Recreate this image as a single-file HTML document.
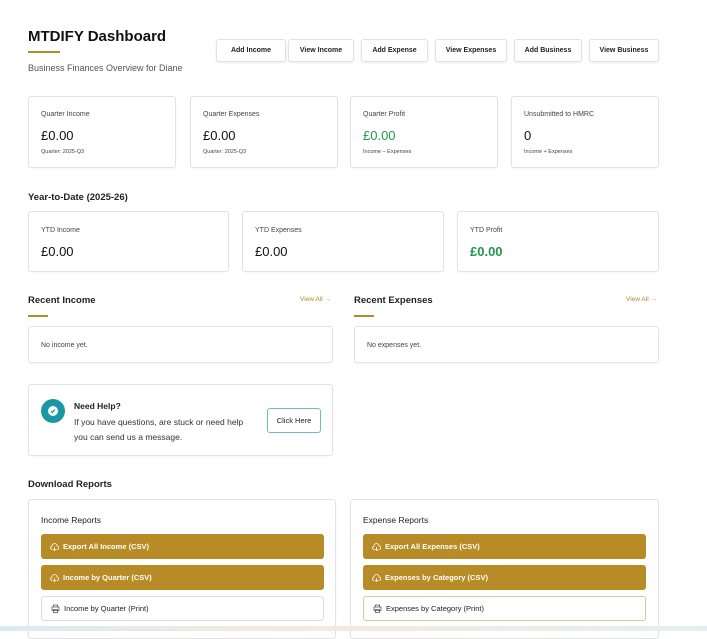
<!DOCTYPE html>
<html><head><style>
*{margin:0;padding:0;box-sizing:border-box}
body{width:707px;height:631px;overflow:hidden;background:#fff;font-family:"Liberation Sans",sans-serif;color:#222;position:relative}
.a{position:absolute}
.card{position:absolute;border:1px solid #e3e3e3;border-radius:3px;background:#fff;box-shadow:0 1px 2px rgba(0,0,0,.04)}
.btn{position:absolute;top:39px;height:23px;border:1px solid #e2e2e2;border-radius:3px;font-size:7px;font-weight:bold;display:flex;align-items:center;justify-content:center;box-shadow:0 1px 2px rgba(0,0,0,.08);color:#222}
.lbl{position:absolute;font-size:7px;color:#444}
.val{position:absolute;font-size:13px;color:#111}
.sub{position:absolute;font-size:5.5px;color:#444}
.g{color:#1e9a4a}
.h{position:absolute;font-size:9.5px;font-weight:bold;color:#222}
.ul{position:absolute;height:2px;background:#b8892a}
.va{position:absolute;font-size:6.5px;color:#b8892a}
.gb{position:absolute;height:25px;background:#b78b25;border-radius:3px;color:#fff;font-size:7.5px;font-weight:bold;display:flex;align-items:center;padding-left:9px}
.wb{position:absolute;height:25px;background:#fff;border:1px solid #ddd;border-radius:3px;color:#222;font-size:7.5px;display:flex;align-items:center;padding-left:9px}
svg{margin-right:4px}
</style></head><body>
<div class="a" style="left:28px;top:28px;font-size:15px;font-weight:bold;color:#111">MTDIFY Dashboard</div>
<div class="ul" style="left:28px;top:51px;width:32px"></div>
<div class="a" style="left:28px;top:63px;font-size:9px;color:#555">Business Finances Overview for Diane</div>
<div class="btn" style="left:216px;width:70px">Add Income</div>
<div class="btn" style="left:288px;width:66px">View Income</div>
<div class="btn" style="left:361px;width:67px">Add Expense</div>
<div class="btn" style="left:435px;width:72px">View Expenses</div>
<div class="btn" style="left:514px;width:68px">Add Business</div>
<div class="btn" style="left:589px;width:70px">View Business</div>

<div class="card" style="left:28px;top:96px;width:148px;height:72px"><div class="lbl" style="left:12px;top:14px">Quarter Income</div><div class="val" style="left:12px;top:31px">£0.00</div><div class="sub" style="left:12px;top:52px">Quarter: 2025-Q3</div></div>
<div class="card" style="left:190px;top:96px;width:148px;height:72px"><div class="lbl" style="left:12px;top:14px">Quarter Expenses</div><div class="val" style="left:12px;top:31px">£0.00</div><div class="sub" style="left:12px;top:52px">Quarter: 2025-Q3</div></div>
<div class="card" style="left:350px;top:96px;width:148px;height:72px"><div class="lbl" style="left:12px;top:14px">Quarter Profit</div><div class="val g" style="left:12px;top:31px">£0.00</div><div class="sub" style="left:12px;top:52px">Income – Expenses</div></div>
<div class="card" style="left:511px;top:96px;width:148px;height:72px"><div class="lbl" style="left:12px;top:14px">Unsubmitted to HMRC</div><div class="val" style="left:12px;top:31px">0</div><div class="sub" style="left:12px;top:52px">Income + Expenses</div></div>

<div class="h" style="left:28px;top:192px">Year-to-Date (2025-26)</div>
<div class="card" style="left:28px;top:211px;width:201px;height:61px"><div class="lbl" style="left:12px;top:15px">YTD Income</div><div class="val" style="left:12px;top:32px">£0.00</div></div>
<div class="card" style="left:242px;top:211px;width:202px;height:61px"><div class="lbl" style="left:12px;top:15px">YTD Expenses</div><div class="val" style="left:12px;top:32px">£0.00</div></div>
<div class="card" style="left:457px;top:211px;width:202px;height:61px"><div class="lbl" style="left:12px;top:15px">YTD Profit</div><div class="val g" style="left:12px;top:32px;font-weight:bold">£0.00</div></div>

<div class="h" style="left:28px;top:295px">Recent Income</div>
<div class="ul" style="left:28px;top:315px;width:20px"></div>
<div class="va" style="left:300px;top:296px">View All →</div>
<div class="h" style="left:354px;top:295px">Recent Expenses</div>
<div class="ul" style="left:354px;top:315px;width:20px"></div>
<div class="va" style="left:626px;top:296px">View All →</div>
<div class="card" style="left:28px;top:326px;width:305px;height:37px"><div class="lbl" style="left:12px;top:15px">No income yet.</div></div>
<div class="card" style="left:354px;top:326px;width:305px;height:37px"><div class="lbl" style="left:12px;top:15px">No expenses yet.</div></div>

<div class="card" style="left:28px;top:384px;width:305px;height:72px">
<div class="a" style="left:12px;top:14px;width:24px;height:24px;border-radius:50%;background:#1a97a5"><div class="a" style="left:7px;top:7px;width:10px;height:10px;border-radius:50%;background:#fff"></div><svg class="a" style="left:8px;top:8px" width="8" height="8" viewBox="0 0 8 8"><path d="M2 4.2L3.4 5.5 6 2.6" stroke="#1a97a5" stroke-width="1.3" fill="none"/></svg></div>
<div class="a" style="left:45px;top:16px;font-size:8.5px;font-weight:bold">Need Help?</div>
<div class="a" style="left:45px;top:30px;font-size:8.5px;line-height:15px;color:#333">If you have questions, are stuck or need help<br>you can send us a message.</div>
<div class="a" style="left:238px;top:23px;width:54px;height:25px;border:1px solid #6bbdc6;border-radius:3px;font-size:7.5px;display:flex;align-items:center;justify-content:center">Click Here</div>
</div>

<div class="h" style="left:28px;top:479px">Download Reports</div>
<div class="card" style="left:28px;top:499px;width:308px;height:140px">
<div class="a" style="left:12px;top:15px;font-size:8.5px">Income Reports</div></div>
<div class="card" style="left:350px;top:499px;width:309px;height:140px">
<div class="a" style="left:12px;top:15px;font-size:8.5px">Expense Reports</div></div>
<div class="gb" style="left:41px;top:534px;width:283px"><svg width="9" height="8" viewBox="0 0 9 8"><path d="M2.5 6.5H2A1.8 1.8 0 0 1 2 3 2.5 2.5 0 0 1 7 3 1.7 1.7 0 0 1 7 6.5H6.5M4.5 4V7.5M3.3 6.4L4.5 7.5 5.7 6.4" stroke="#fff" stroke-width=".8" fill="none"/></svg>Export All Income (CSV)</div>
<div class="gb" style="left:41px;top:565px;width:283px"><svg width="9" height="8" viewBox="0 0 9 8"><path d="M2.5 6.5H2A1.8 1.8 0 0 1 2 3 2.5 2.5 0 0 1 7 3 1.7 1.7 0 0 1 7 6.5H6.5M4.5 4V7.5M3.3 6.4L4.5 7.5 5.7 6.4" stroke="#fff" stroke-width=".8" fill="none"/></svg>Income by Quarter (CSV)</div>
<div class="wb" style="left:41px;top:596px;width:283px"><svg width="9" height="9" viewBox="0 0 9 9"><path d="M2.5 3V1H6.5V3M1 3H8V6.5H1ZM2.5 5.5H6.5V8.5H2.5Z" stroke="#555" stroke-width=".8" fill="none"/></svg>Income by Quarter (Print)</div>
<div class="gb" style="left:363px;top:534px;width:283px"><svg width="9" height="8" viewBox="0 0 9 8"><path d="M2.5 6.5H2A1.8 1.8 0 0 1 2 3 2.5 2.5 0 0 1 7 3 1.7 1.7 0 0 1 7 6.5H6.5M4.5 4V7.5M3.3 6.4L4.5 7.5 5.7 6.4" stroke="#fff" stroke-width=".8" fill="none"/></svg>Export All Expenses (CSV)</div>
<div class="gb" style="left:363px;top:565px;width:283px"><svg width="9" height="8" viewBox="0 0 9 8"><path d="M2.5 6.5H2A1.8 1.8 0 0 1 2 3 2.5 2.5 0 0 1 7 3 1.7 1.7 0 0 1 7 6.5H6.5M4.5 4V7.5M3.3 6.4L4.5 7.5 5.7 6.4" stroke="#fff" stroke-width=".8" fill="none"/></svg>Expenses by Category (CSV)</div>
<div class="wb" style="left:363px;top:596px;width:283px;border-color:#d8c79a"><svg width="9" height="9" viewBox="0 0 9 9"><path d="M2.5 3V1H6.5V3M1 3H8V6.5H1ZM2.5 5.5H6.5V8.5H2.5Z" stroke="#555" stroke-width=".8" fill="none"/></svg>Expenses by Category (Print)</div>
<div class="a" style="left:0;top:626px;width:707px;height:5px;background:linear-gradient(90deg,#d9ecf3,#f5e9dc 40%,#e4eef2)"></div>
</body></html>
